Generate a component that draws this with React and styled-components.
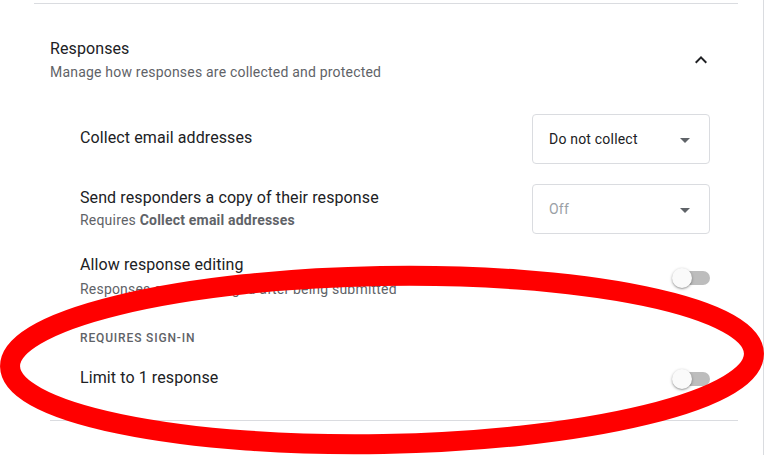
import React from "react";
import styled, { createGlobalStyle } from "styled-components";

const Global = createGlobalStyle`
  html, body { margin: 0; padding: 0; background: #fff; }
  body { font-family: Roboto, "Noto Sans", Arial, sans-serif; color: #202124; }
`;

const Page = styled.div`
  position: relative;
  width: 765px;
  height: 455px;
  overflow: hidden;
  background: #fff;
`;

const Panel = styled.div`
  width: 764px;
  height: 455px;
  box-sizing: border-box;
  border-right: 1px solid #dadce0;
  padding: 3px 25px 0 34px;
`;

const Divider = styled.div`
  height: 1px;
  background: #dadce0;
`;

const Section = styled.section`
  padding-left: 16px;
`;

const Header = styled.div`
  display: flex;
  align-items: center;
  justify-content: space-between;
  padding: 33px 25px 0 0;
`;

const HeaderText = styled.div`
  display: flex;
  flex-direction: column;
  gap: 1px;
`;

const Title = styled.div`
  font-size: 16px;
  line-height: 24px;
  letter-spacing: 0.1px;
  color: #202124;
`;

const Subtitle = styled.div`
  font-size: 14px;
  line-height: 20px;
  letter-spacing: 0.2px;
  color: #5f6368;
`;

const IconButton = styled.div`
  width: 24px;
  height: 24px;
  display: flex;
`;

const Rows = styled.div`
  padding: 32px 28px 30px 30px;
  display: flex;
  flex-direction: column;
`;

const Row = styled.div`
  display: flex;
  align-items: center;
  justify-content: space-between;
  margin-top: ${(p) => p.$mt || 0}px;
`;

const RowText = styled.div`
  display: flex;
  flex-direction: column;
  gap: ${(p) => p.$gap || 0}px;
  margin-top: ${(p) => p.$mt || 0}px;
`;

const RowTitle = styled.div`
  font-size: 16px;
  line-height: 24px;
  letter-spacing: 0.1px;
  color: #202124;
  margin-top: ${(p) => p.$mt || 0}px;
`;

const RowSub = styled.div`
  font-size: 14px;
  line-height: 20px;
  letter-spacing: 0.2px;
  color: #5f6368;
  b { font-weight: 700; }
`;

const Select = styled.div`
  width: 178px;
  height: 50px;
  box-sizing: border-box;
  border: 1px solid #dadce0;
  border-radius: 4px;
  display: flex;
  align-items: center;
  justify-content: space-between;
  padding: 0 19px 0 16px;
  font-size: 14px;
  letter-spacing: 0.2px;
  color: ${(p) => (p.$disabled ? "#9aa0a6" : "#202124")};
`;

const Caret = styled.div`
  width: 0;
  height: 0;
  border-left: 5px solid transparent;
  border-right: 5px solid transparent;
  border-top: 5px solid #5f6368;
  margin-top: 2px;
`;

const Switch = styled.div`
  position: relative;
  width: 38px;
  height: 20px;
  flex: none;
  margin-top: ${(p) => p.$mt || 0}px;
`;

const Track = styled.div`
  position: absolute;
  right: 0;
  top: 3px;
  width: 34px;
  height: 14px;
  border-radius: 7px;
  background: #bdbdbd;
`;

const Thumb = styled.div`
  position: absolute;
  left: 0;
  top: 0;
  width: 20px;
  height: 20px;
  border-radius: 50%;
  background: #fafafa;
  box-shadow: 0 1px 3px rgba(0, 0, 0, 0.35), 0 1px 1px rgba(0, 0, 0, 0.12);
`;

const Label = styled.div`
  font-size: 12px;
  line-height: 16px;
  font-weight: 500;
  letter-spacing: 0.85px;
  text-transform: uppercase;
  color: #5f6368;
  margin-top: ${(p) => p.$mt}px;
`;

const Overlay = styled.svg`
  position: absolute;
  left: 0;
  top: 0;
  pointer-events: none;
`;

const Toggle = ({ mt }) => (
  <Switch $mt={mt}>
    <Track />
    <Thumb />
  </Switch>
);

export default function App() {
  return (
    <Page>
      <Global />
      <Panel>
        <Divider />
        <Section>
          <Header>
            <HeaderText>
              <Title>Responses</Title>
              <Subtitle>Manage how responses are collected and protected</Subtitle>
            </HeaderText>
            <IconButton>
              <svg width="24" height="24" viewBox="0 0 24 24">
                <path d="M12 8l-6 6 1.41 1.41L12 10.83l4.59 4.58L18 14z" fill="#202124" />
              </svg>
            </IconButton>
          </Header>
          <Rows>
            <Row>
              <RowTitle $mt={-2}>Collect email addresses</RowTitle>
              <Select>
                <span>Do not collect</span>
                <Caret />
              </Select>
            </Row>
            <Row $mt={20}>
              <RowText $mt={-2}>
                <RowTitle>Send responders a copy of their response</RowTitle>
                <RowSub>
                  Requires <b>Collect email addresses</b>
                </RowSub>
              </RowText>
              <Select $disabled>
                <span>Off</span>
                <Caret />
              </Select>
            </Row>
            <Row $mt={19}>
              <RowText $gap={2}>
                <RowTitle>Allow response editing</RowTitle>
                <RowSub>Responses can be changed after being submitted</RowSub>
              </RowText>
              <Toggle mt={4} />
            </Row>
            <Label $mt={31}>Requires sign-in</Label>
            <Row $mt={20}>
              <RowTitle>Limit to 1 response</RowTitle>
              <Toggle mt={2} />
            </Row>
          </Rows>
          <Divider />
        </Section>
      </Panel>
      <Overlay width="765" height="455" viewBox="0 0 765 455">
        <ellipse
          cx="382"
          cy="360"
          rx="372"
          ry="84"
          fill="none"
          stroke="#ff0000"
          strokeWidth="20"
          transform="rotate(-1 382 360)"
        />
      </Overlay>
    </Page>
  );
}
